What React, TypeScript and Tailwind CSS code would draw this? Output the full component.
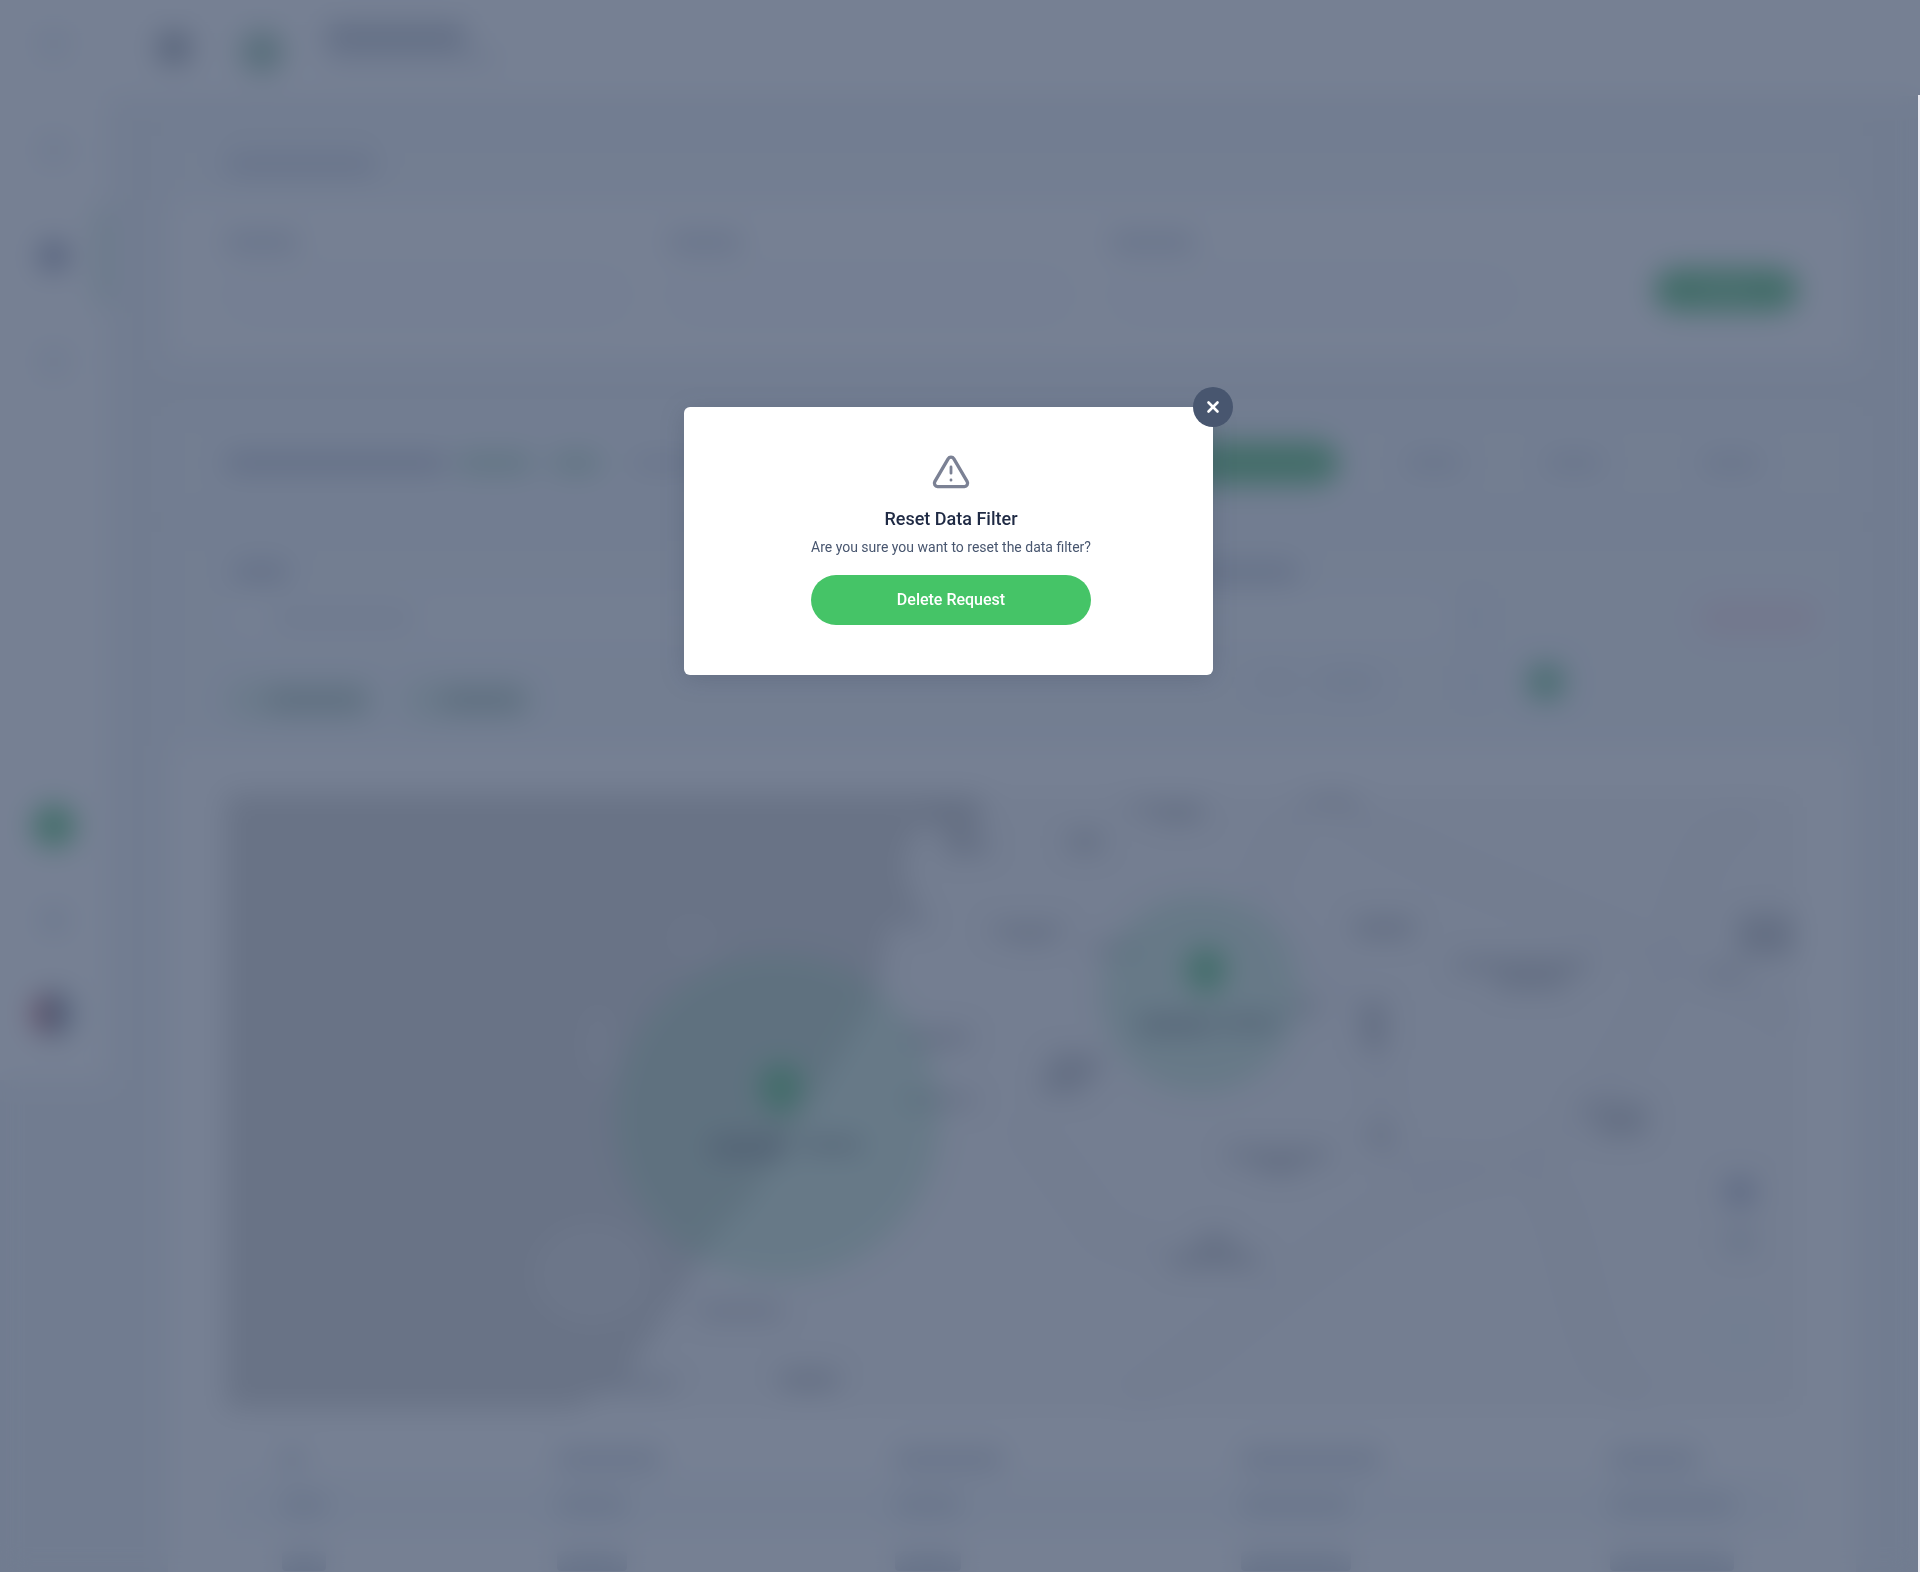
import { X } from "lucide-react";

const sidebarTop = [
  { tone: "bg-slate-200", active: false },
  { tone: "bg-slate-200", active: false },
  { tone: "bg-[#7f88a6]", active: true },
  { tone: "bg-slate-200", active: false },
];

const filterFields = ["w-[72px]", "w-[72px]", "w-[84px]"];

const columns = [
  { col: "w-[17.5%]", head: "w-5", cell: "w-11" },
  { col: "w-[21.5%]", head: "w-[104px]", cell: "w-[70px]" },
  { col: "w-[22%]", head: "w-[108px]", cell: "w-[66px]" },
  { col: "w-[23.5%]", head: "w-[140px]", cell: "w-[110px]" },
  { col: "w-[15.5%]", head: "w-[88px]", cell: "w-[124px]" },
];

const mapLabels: [number, number, number, number][] = [
  [700, 16, 60, 8],
  [728, 44, 36, 16],
  [842, 38, 34, 20],
  [902, 8, 78, 10],
  [930, 14, 44, 14],
  [1080, 2, 52, 10],
  [672, 120, 30, 12],
  [764, 130, 74, 12],
  [784, 136, 40, 12],
  [862, 150, 50, 10],
  [1128, 124, 60, 20],
  [1228, 164, 136, 14],
  [1270, 180, 70, 16],
  [1512, 120, 56, 42],
  [1480, 174, 40, 10],
  [680, 236, 64, 16],
  [676, 300, 74, 12],
  [822, 260, 52, 24],
  [814, 284, 44, 16],
  [1070, 204, 22, 18],
  [1136, 206, 24, 50],
  [1142, 332, 24, 18],
  [1000, 354, 104, 14],
  [1032, 366, 44, 14],
  [1352, 308, 70, 10],
  [1370, 320, 50, 22],
  [972, 440, 34, 26],
  [944, 458, 90, 16],
  [472, 510, 84, 14],
  [380, 584, 70, 12],
  [554, 576, 58, 20],
];

function MapView() {
  return (
    <svg
      viewBox="0 0 1572 615"
      preserveAspectRatio="none"
      className="block h-[615px] w-full"
      aria-hidden="true"
    >
      <rect width="1572" height="615" fill="#f5f5f5" />
      <path
        d="M0 0H756L748 46L722 66L712 30L690 34L676 74L692 112L664 128L652 196L640 220L610 270L560 350L520 410L490 440L470 476L440 520L400 580L350 615H0Z"
        fill="#c9c9c9"
      />
      <g fill="#dcdcdc">
        <ellipse cx="466" cy="144" rx="26" ry="24" opacity=".5" />
        <ellipse cx="372" cy="250" rx="16" ry="40" opacity=".7" />
        <ellipse cx="366" cy="480" rx="60" ry="52" opacity=".8" />
      </g>
      <g fill="none" stroke="#ebebee" strokeWidth="14">
        <path d="M1100 0C1180 70 1300 100 1440 165C1500 190 1540 200 1572 230" />
        <path d="M1520 20C1460 40 1450 170 1420 220C1370 320 1330 360 1270 375C1180 380 1050 500 900 615" />
        <path d="M1300 370C1360 420 1340 560 1420 615" />
        <path d="M1080 0L1030 100L1150 240L1160 370L1270 375" />
        <path d="M800 330L880 440L970 470" />
      </g>
      <g fill="#7b7f88" opacity=".5">
        {mapLabels.map(([x, y, w, h]) => (
          <rect key={`${x}-${y}`} x={x} y={y} width={w} height={h} rx="4" />
        ))}
      </g>
      <g fill="#3fb870" fillOpacity=".28">
        <circle cx="552" cy="323" r="162" />
        <circle cx="974" cy="200" r="99" />
      </g>
      <g fill="#32b35c">
        <path d="M555 324C545 314 533 304 533 292A22 22 0 0 1 577 292C577 304 565 314 555 324Z" />
        <path d="M980 204C970 194 960 186 960 174A20 20 0 0 1 1000 174C1000 186 990 194 980 204Z" />
      </g>
      <g fill="#3b4a55" opacity=".5">
        <rect x="484" y="344" width="78" height="20" rx="4" />
        <rect x="576" y="344" width="60" height="14" rx="4" />
        <rect x="912" y="222" width="74" height="18" rx="4" />
        <rect x="994" y="222" width="60" height="14" rx="4" />
      </g>
      <g>
        <rect x="1500" y="384" width="28" height="28" rx="4" fill="#9da5bf" />
        <rect x="1500" y="436" width="28" height="22" rx="4" fill="#c6ced5" />
        <rect x="1494" y="520" width="40" height="40" rx="6" fill="#eef5fa" />
      </g>
    </svg>
  );
}

function Dashboard() {
  return (
    <div className="relative min-h-[1572px] bg-[#ecf0f4]" aria-hidden="true">
      <div className="flex">
        <aside className="flex h-[1080px] w-[108px] shrink-0 flex-col items-center justify-between bg-white pt-8 pb-11">
          <div className="flex w-full flex-col gap-[82px]">
            {sidebarTop.map((item, i) => (
              <div key={i} className="relative flex h-6 w-full items-center justify-center">
                <span className={`size-7 rounded-md ${item.tone}`} />
                {item.active && (
                  <span className="absolute -top-9 right-0 h-24 w-3 rounded-l-lg bg-[#c3e0d0]" />
                )}
              </div>
            ))}
          </div>
          <div className="flex flex-col items-center gap-[60px]">
            <span className="size-11 rounded-full bg-[#3cb961]" />
            <span className="size-6 rounded-full bg-slate-300" />
            <span className="flex size-11 overflow-hidden rounded-full">
              <span className="w-1/3 bg-[#c03a50]" />
              <span className="w-2/3 bg-gradient-to-r from-slate-700 to-slate-300" />
            </span>
          </div>
        </aside>

        <div className="min-w-0 flex-1">
          <header className="flex h-24 items-center bg-white pl-[50px]">
            <span className="size-8 rounded-lg bg-[#8a929d]" />
            <span className="mt-2 ml-[50px] size-11 rounded-full bg-[#8dbaa1]" />
            <div className="ml-[42px] flex flex-col gap-1 pb-2">
              <span className="h-6 w-[140px] rounded bg-[#aeb5c2]" />
              <span className="h-3 w-[170px] rounded bg-[#d6dbe3]" />
            </div>
          </header>

          <main className="mr-[64px] ml-[60px] pt-10">
            <section>
              <div className="flex h-16 items-center bg-[#f1f5f8] pb-2 pl-[58px]">
                <span className="h-5 w-[150px] rounded bg-[#c3c9d8]" />
              </div>
              <div className="flex items-start bg-white px-[58px] pt-8 pb-[38px]">
                <div className="grid flex-1 grid-cols-3 gap-10 pr-[140px]">
                  {filterFields.map((w, i) => (
                    <div key={i} className="flex flex-col gap-4">
                      <span className={`h-5 rounded bg-[#cad0dc] ${w}`} />
                      <span className="h-[54px] rounded-full border-2 border-[#e0e5ef] bg-[#fafbfd]" />
                    </div>
                  ))}
                </div>
                <span className="mt-9 flex h-[44px] w-[144px] items-center justify-center rounded-full bg-[#36b35a]">
                  <span className="h-2 w-12 rounded bg-white/30" />
                </span>
              </div>
            </section>

            <section className="mt-14">
              <div className="flex h-[94px] items-center bg-[#f1f5f8] px-[58px]">
                <span className="h-5 w-[220px] rounded bg-[#b3bacb]" />
                <span className="ml-3 h-5 w-[74px] rounded bg-[#a8d0bb]" />
                <span className="ml-5 h-5 w-[48px] rounded bg-[#a8d0bb]" />
                <span className="ml-8 h-4 w-[120px] rounded bg-[#ccd1de]" />
                <span className="ml-auto h-11 w-[160px] rounded-full bg-[#36b35a]" />
                <span className="ml-[67px] h-5 w-[56px] rounded bg-[#cdd3de]" />
                <span className="ml-[84px] h-5 w-[56px] rounded bg-[#cdd3de]" />
                <span className="ml-[101px] h-5 w-[56px] rounded bg-[#cdd3de]" />
                <span className="ml-[38px] w-px" />
              </div>

              <div className="mt-6 h-[212px] bg-[#f1f5f8] px-[58px] pt-7">
                <div className="flex">
                  <span className="ml-2 h-5 w-[54px] rounded bg-[#b9c0cf]" />
                  <span className="mr-[500px] ml-auto h-5 w-[120px] rounded bg-[#b9c0cf]" />
                </div>
                <div className="mt-3 -mr-5 flex items-center">
                  <div className="flex h-12 flex-1 items-center rounded-full bg-[#f8fbfc] pl-12">
                    <span className="h-4 w-[140px] rounded bg-[#d8dde6]" />
                  </div>
                  <div className="ml-[460px] h-12 w-[260px] rounded-full bg-[#f8fbfc]" />
                  <span className="ml-4 h-10 w-4 bg-[#e2e8f0]" />
                  <span className="ml-[216px] h-9 w-[120px] rounded-full bg-[#f1dde6]" />
                </div>
                <div className="mt-0.5 flex items-center">
                  <span className="mt-9 flex h-10 w-[150px] items-center justify-end rounded-full bg-[#d3e8dd] pr-3">
                    <span className="h-5 w-24 rounded bg-[#9fb6ad]" />
                  </span>
                  <span className="mt-9 ml-7 flex h-10 w-[130px] items-center justify-end rounded-full bg-[#d3e8dd] pr-3">
                    <span className="h-5 w-20 rounded bg-[#9fb6ad]" />
                  </span>
                  <span className="ml-auto h-5 w-[44px] rounded bg-[#e0e5ec]" />
                  <span className="ml-5 h-5 w-[60px] rounded bg-[#d8dee6]" />
                  <span className="ml-[88px] h-9 w-4 bg-[#e2e8f0]" />
                  <span className="ml-[46px] size-9 rounded-lg bg-[#5ab880]" />
                  <span className="w-[234px]" />
                </div>
              </div>

              <div className="bg-white px-[58px] pt-12">
                <MapView />
                <table className="mt-8 w-full table-fixed">
                  <thead>
                    <tr className="h-9">
                      {columns.map((c) => (
                        <th key={c.col} className={`pl-14 ${c.col}`}>
                          <span className={`block h-5 rounded bg-[#c5ccd7] ${c.head}`} />
                        </th>
                      ))}
                    </tr>
                  </thead>
                  <tbody>
                    {[0, 1].map((row) => (
                      <tr key={row} className={row === 0 ? "h-14 bg-[#f4f8fb]" : "h-14"}>
                        {columns.map((c) => (
                          <td key={c.col} className="pl-14">
                            <span className={`block h-5 rounded bg-[#c8cfd9] ${c.cell}`} />
                          </td>
                        ))}
                      </tr>
                    ))}
                  </tbody>
                </table>
              </div>
            </section>
          </main>
        </div>
      </div>
    </div>
  );
}

function WarningIcon() {
  return (
    <svg
      viewBox="0 0 38 34"
      className="h-[34px] w-[38px]"
      fill="none"
      stroke="#7b8194"
      strokeWidth="3.3"
      strokeLinecap="round"
      strokeLinejoin="round"
      aria-hidden="true"
    >
      <path d="M16.1 3.8 2.8 26.6A3.4 3.4 0 0 0 5.6 31.6H32.4A3.4 3.4 0 0 0 35.2 26.6L21.9 3.8A3.4 3.4 0 0 0 16.1 3.8Z" />
      <path d="M19 12V18.2M19 25V25.2" strokeWidth="2.8" />
    </svg>
  );
}

export default function App() {
  return (
    <div className="relative h-[1572px] overflow-hidden font-['Roboto',sans-serif]">
      <Dashboard />
      <div className="absolute inset-0 flex items-start justify-center bg-[#48566f]/75 pt-[407px] pr-[23px] backdrop-blur-[14px]">
        <div
          role="dialog"
          aria-modal="true"
          aria-labelledby="reset-title"
          aria-describedby="reset-text"
          className="relative flex w-[529px] flex-col items-center rounded-md bg-white pt-12 pb-[50px] pl-[5px] text-center shadow-[0_4px_24px_rgba(50,60,80,0.22)]"
        >
          <button
            type="button"
            aria-label="Close"
            className="absolute -top-5 -right-5 flex size-10 items-center justify-center rounded-full bg-[#48566f] text-white"
          >
            <X size={18} strokeWidth={3.5} />
          </button>
          <WarningIcon />
          <h1 id="reset-title" className="mt-[18px] text-lg leading-6 font-medium text-[#1f2a44]">
            Reset Data Filter
          </h1>
          <p id="reset-text" className="mt-1 text-sm leading-6 text-[#48566f]">
            Are you sure you want to reset the data filter?
          </p>
          <button
            type="button"
            className="mt-4 h-[50px] w-[280px] rounded-full bg-[#45c467] text-base font-medium text-white"
          >
            Delete Request
          </button>
        </div>
      </div>
      <div className="absolute top-[95px] right-0 bottom-0 w-0.5 bg-[#e9e9f0]" />
    </div>
  );
}
